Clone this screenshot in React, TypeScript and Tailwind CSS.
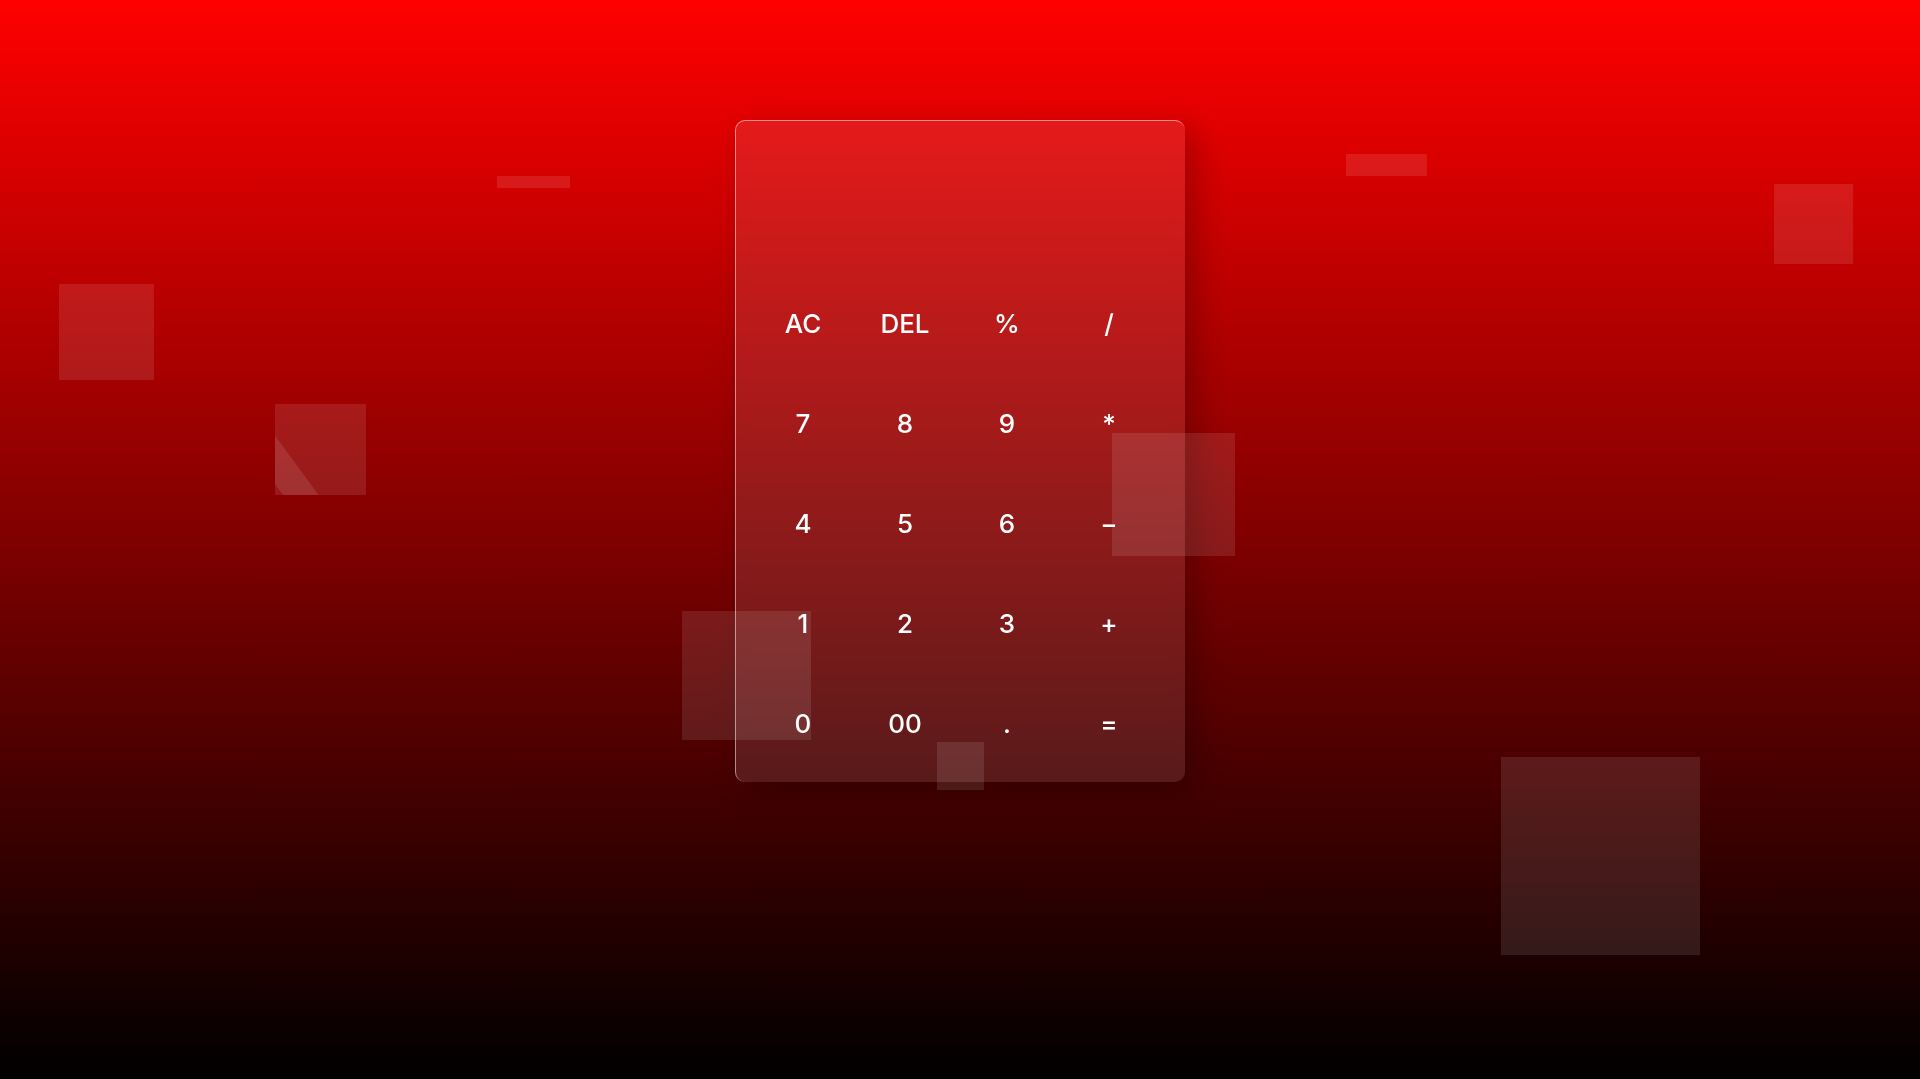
import React from "react";

const keys = [
  "AC", "DEL", "%", "/",
  "7", "8", "9", "*",
  "4", "5", "6", "−",
  "1", "2", "3", "+",
  "0", "00", ".", "=",
];

type Sq = { l: string; t: string; w: string; h: string; stripe?: boolean };

const squares: Sq[] = [
  { l: "left-[497px]", t: "top-[176px]", w: "w-[73px]", h: "h-[12px]" },
  { l: "left-[59px]", t: "top-[284px]", w: "w-[95px]", h: "h-[96px]" },
  { l: "left-[275px]", t: "top-[404px]", w: "w-[91px]", h: "h-[91px]", stripe: true },
  { l: "left-[1112px]", t: "top-[433px]", w: "w-[123px]", h: "h-[123px]" },
  { l: "left-[682px]", t: "top-[611px]", w: "w-[129px]", h: "h-[129px]" },
  { l: "left-[937px]", t: "top-[742px]", w: "w-[47px]", h: "h-[48px]" },
  { l: "left-[1346px]", t: "top-[154px]", w: "w-[81px]", h: "h-[22px]" },
  { l: "left-[1774px]", t: "top-[184px]", w: "w-[79px]", h: "h-[80px]" },
  { l: "left-[1501px]", t: "top-[757px]", w: "w-[199px]", h: "h-[198px]" },
];

export default function App() {
  return (
    <div className="relative min-h-screen w-full overflow-hidden bg-[linear-gradient(to_bottom,#ff0000,#000000)] font-['Inter','Noto_Sans',sans-serif]">
      <div className="flex justify-center pt-[120px]">
        <div className="flex h-[662px] w-[450px] flex-col rounded-[10px] border-t border-l border-white/50 bg-white/10 shadow-[10px_10px_30px_rgba(0,0,0,0.25)] backdrop-blur-[5px]">
          <div className="h-[152px] shrink-0" />
          <div className="grid grid-cols-[repeat(4,102px)] grid-rows-[repeat(5,100px)] pl-[16px]">
            {keys.map((k) => (
              <span
                key={k}
                className="flex items-center justify-center text-[26px] font-medium text-white select-none"
              >
                {k}
              </span>
            ))}
          </div>
        </div>
      </div>

      {squares.map((s, i) => (
        <div
          key={i}
          className={`absolute ${s.l} ${s.t} ${s.w} ${s.h} overflow-hidden bg-white/10`}
        >
          {s.stripe && (
            <div className="absolute inset-0 bg-white/10 [clip-path:polygon(0_35%,48%_100%,9%_100%,0_88%)]" />
          )}
        </div>
      ))}
    </div>
  );
}
